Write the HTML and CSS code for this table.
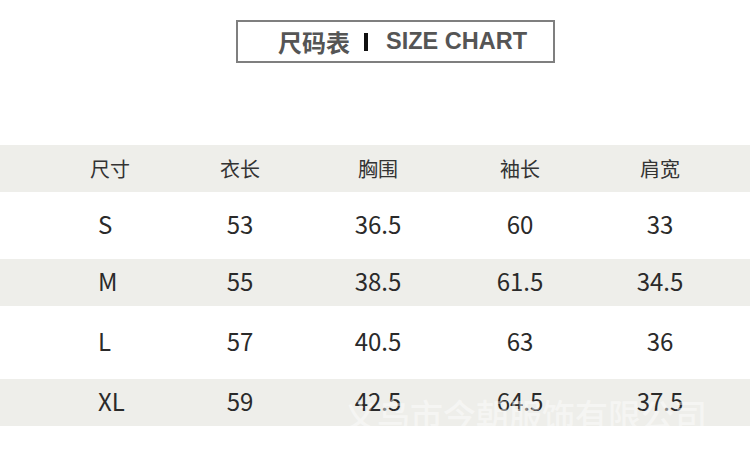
FILE: index.html
```html
<!DOCTYPE html>
<html lang="zh">
<head>
<meta charset="utf-8">
<link rel="stylesheet" href="styles.css">
</head>
<body>
<div class="page">
  <div class="title-wrap">
    <div class="title-box">
      <span class="title-cn">尺码表</span>
      <span class="title-bar"></span>
      <span class="title-en">SIZE CHART</span>
    </div>
  </div>
  <div class="table">
    <div class="row band head">
      <div class="cell">尺寸</div><div class="cell">衣长</div><div class="cell">胸围</div><div class="cell">袖长</div><div class="cell">肩宽</div>
    </div>
    <div class="row r-s">
      <div class="cell size">S</div><div class="cell">53</div><div class="cell">36.5</div><div class="cell">60</div><div class="cell">33</div>
    </div>
    <div class="row band r-m">
      <div class="cell size">M</div><div class="cell">55</div><div class="cell">38.5</div><div class="cell">61.5</div><div class="cell">34.5</div>
    </div>
    <div class="row r-l">
      <div class="cell size">L</div><div class="cell">57</div><div class="cell">40.5</div><div class="cell">63</div><div class="cell">36</div>
    </div>
    <div class="row band r-xl">
      <div class="cell size">XL</div><div class="cell">59</div><div class="cell">42.5</div><div class="cell">64.5</div><div class="cell">37.5</div>
    </div>
  </div>
  <div class="watermark">义乌市今朝服饰有限公司</div>
</div>
</body>
</html>
```
FILE: styles.css
```css
html, body {
  margin: 0;
  padding: 0;
  background: #ffffff;
}
.page {
  position: relative;
  width: 750px;
  height: 464px;
  overflow: hidden;
  font-family: "Noto Sans CJK SC", "Noto Sans", sans-serif;
}
.title-wrap {
  display: flex;
  padding-top: 20px;
  padding-left: 236px;
}
.title-box {
  box-sizing: border-box;
  width: 319px;
  height: 43px;
  border: 2px solid #7f7f7f;
  display: flex;
  align-items: center;
  padding-left: 40px;
}
.title-cn {
  font-size: 24px;
  font-weight: 700;
  color: #555555;
  line-height: 1;
}
.title-bar {
  width: 4px;
  height: 18px;
  background: #111111;
  margin-left: 14px;
}
.title-en {
  font-family: "Liberation Sans", Arial, sans-serif;
  font-weight: 700;
  font-size: 23.5px;
  color: #555555;
  margin-left: 18px;
  line-height: 1;
}
.table {
  margin-top: 82px;
}
.row {
  display: grid;
  grid-template-columns: 130px 130px 146px 138px 142px;
  padding-left: 45px;
  align-items: center;
  font-size: 24px;
  color: #2a2a2a;
}
.band {
  background: #eeeeea;
}
.head {
  height: 47px;
  font-size: 20px;
  color: #333333;
}
.r-s { height: 67px; }
.r-m { height: 47px; }
.r-l { height: 73px; }
.r-xl { height: 47px; }
.cell {
  text-align: center;
  line-height: 1;
  padding-bottom: 3px;
}
.head .cell {
  padding-bottom: 0;
}
.cell.size {
  text-align: left;
  padding-left: 53px;
}
.watermark {
  position: absolute;
  left: 344px;
  top: 398px;
  font-size: 33px;
  font-weight: 500;
  line-height: 1;
  white-space: nowrap;
  color: rgba(255, 255, 255, 0.45);
}
```
